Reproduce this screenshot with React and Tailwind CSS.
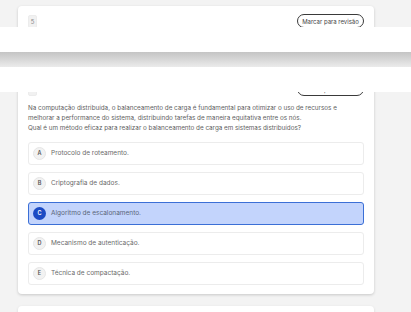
import React from "react";

const options = [
  { l: "A", t: "Protocolo de roteamento." },
  { l: "B", t: "Criptografia de dados." },
  { l: "C", t: "Algoritmo de escalonamento.", sel: true },
  { l: "D", t: "Mecanismo de autenticação." },
  { l: "E", t: "Técnica de compactação." },
];

function Header() {
  return (
    <div className="flex items-center justify-between h-[14px]">
      <div className="w-[9px] h-[13px] rounded-[2px] bg-[#f1f1f1] border border-[#ececec] flex items-center justify-center text-[6px] text-[#888]">
        5
      </div>
      <div className="h-[14px] w-[67px] rounded-full border border-[#3a3a3a] flex items-center justify-center text-[6px] text-[#444] whitespace-nowrap">
        Marcar para revisão
      </div>
    </div>
  );
}

export default function App() {
  return (
    <div
      className="relative w-[411px] h-[312px] overflow-hidden bg-[#f3f3f3] pt-[6px]"
      style={{ fontFamily: "Inter, 'Noto Sans', sans-serif" }}
    >
      <div className="ml-[18px] w-[356px] bg-white rounded-[4px] shadow-[0_1px_3px_rgba(0,0,0,0.18)] px-[10px] pt-[8px] pb-[9px]">
        <Header />
        <div className="h-[54px]" />
        <Header />
        <div className="mt-[7px] text-[6.3px] leading-[10px] text-[#5e5e5e]">
          <div className="whitespace-nowrap">
            Na computação distribuída, o balanceamento de carga é fundamental para otimizar o uso de recursos e
          </div>
          <div className="whitespace-nowrap">
            melhorar a performance do sistema, distribuindo tarefas de maneira equitativa entre os nós.
          </div>
          <div className="whitespace-nowrap">
            Qual é um método eficaz para realizar o balanceamento de carga em sistemas distribuídos?
          </div>
        </div>
        <div className="mt-[9px] flex flex-col gap-[7px]">
          {options.map((o) =>
            o.sel ? (
              <div
                key={o.l}
                className="h-[23px] rounded-[3px] border border-[#3b6fd6] bg-[#c3d4fc] flex items-center pl-[4px] gap-[5px]"
              >
                <div className="w-[13px] h-[13px] rounded-full bg-[#1c4bc4] flex items-center justify-center text-[5.5px] font-semibold text-white">
                  {o.l}
                </div>
                <span className="text-[6.5px] text-[#5a6478]">{o.t}</span>
              </div>
            ) : (
              <div
                key={o.l}
                className="h-[23px] rounded-[3px] border border-[#ececec] bg-white flex items-center pl-[4px] gap-[5px]"
              >
                <div className="w-[13px] h-[13px] rounded-full bg-[#f2f2f2] border border-[#e6e6e6] flex items-center justify-center text-[5.5px] font-semibold text-[#555]">
                  {o.l}
                </div>
                <span className="text-[6.5px] text-[#6a6a6a]">{o.t}</span>
              </div>
            )
          )}
        </div>
      </div>
      <div className="mt-[12px] ml-[18px] w-[356px] h-[40px] bg-white rounded-[4px] shadow-[0_1px_3px_rgba(0,0,0,0.12)]" />

      <div className="absolute left-0 top-[27px] w-full">
        <div className="h-[25px] bg-white" />
        <div className="h-[15px] bg-gradient-to-b from-[#c4c4c4] to-[#ebebeb]" />
        <div className="h-[25px] bg-white" />
      </div>
    </div>
  );
}
